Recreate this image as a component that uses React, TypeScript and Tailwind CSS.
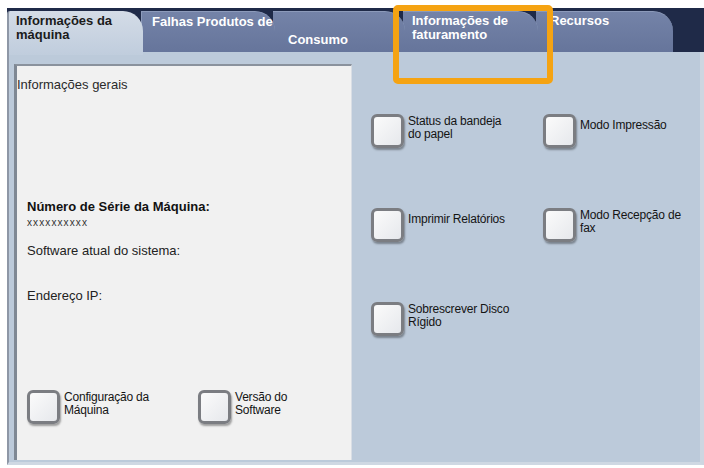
import React from 'react'

type BtnProps = { label: string[]; labelTop?: string }

function SquareButton({ label, labelTop = 'mt-[1px]' }: BtnProps) {
  return (
    <div className="flex items-start">
      <div className="w-[33px] h-[34px] shrink-0 rounded-[6px] border-[3px] border-[#7b7d82] bg-gradient-to-br from-[#fbfbfb] to-[#e6e8ec] shadow-[1px_2px_2px_rgba(0,0,0,0.35)]" />
      <div className={`ml-[4px] ${labelTop} text-[12px] leading-[13px] text-[#141414] tracking-[-0.2px]`}>
        {label.map((l, i) => (
          <div key={i}>{l}</div>
        ))}
      </div>
    </div>
  )
}

export default function App() {
  return (
    <div
      className="relative w-[704px] h-[468px] bg-white overflow-hidden"
      style={{ fontFamily: '"Liberation Sans", Arial, sans-serif' }}
    >
      <div className="absolute left-[7px] top-[8px] w-[697px] h-[457px] flex flex-col">
        {/* tab row */}
        <div className="h-[44px] flex items-start bg-[#1f2a48] pt-[3px] shrink-0">
          <div className="relative w-[136px] h-[44px] rounded-tl-[3px] rounded-tr-[20px] bg-gradient-to-b from-[#d4dce7] to-[#c0cddd] border-l-2 border-[#8e97a6] pl-[7px] pt-[3px] z-20">
            <div className="text-[13px] leading-[14px] font-bold text-[#1b1b1b]">
              <div>Informações da</div>
              <div>máquina</div>
            </div>
          </div>
          <div className="relative w-[134px] h-[41px] -ml-[2px] rounded-tr-[20px] bg-gradient-to-b from-[#7483a8] to-[#66759b] border-t border-l border-[#8c9aba] pl-[10px] pt-[3px] z-10">
            <div className="relative z-30 text-[13px] leading-[14px] font-bold text-white whitespace-nowrap">
              Falhas Produtos de
            </div>
          </div>
          <div className="relative w-[132px] h-[41px] -ml-[2px] rounded-tr-[20px] bg-gradient-to-b from-[#7483a8] to-[#66759b] border-t border-[#8c9aba] pl-[15px] pt-[21px] z-[9]">
            <div className="text-[13px] leading-[14px] font-bold text-white">Consumo</div>
          </div>
          <div className="relative w-[135px] h-[41px] -ml-[2px] rounded-tr-[20px] bg-gradient-to-b from-[#7483a8] to-[#66759b] border-t border-[#8c9aba] pl-[9px] pt-[2px] z-[8]">
            <div className="text-[13px] leading-[14px] font-bold text-white whitespace-nowrap">
              <div>Informações de</div>
              <div>faturamento</div>
            </div>
          </div>
          <div className="relative w-[137px] h-[41px] -ml-[2px] rounded-tr-[20px] bg-gradient-to-b from-[#7483a8] to-[#66759b] border-t border-[#8c9aba] pl-[14px] pt-[2px] z-[7]">
            <div className="text-[13px] leading-[14px] font-bold text-white">Recursos</div>
          </div>
        </div>

        {/* content */}
        <div className="flex-1 flex bg-[#bccada] border-l-2 border-[#8e97a6] border-r-[4px] border-r-[#cdd6e1] border-b-[3px] border-b-[#cfd8e3]">
          {/* left panel */}
          <div className="ml-[5px] mt-[12px] mb-[2px] w-[338px] flex flex-col bg-[#f1f1f1] border-t-2 border-t-[#8a929d] border-l-[3px] border-l-[#7f8894] border-r border-r-[#d9dee5]">
            <div className="mt-[11px] text-[13px] leading-[15px] text-[#2a2a2a]">Informações gerais</div>
            <div className="pl-[10px] mt-[107px] text-[13px] leading-[15px] font-bold text-[#111]">
              Número de Série da Máquina:
            </div>
            <div className="pl-[10px] mt-[3px] text-[10px] leading-[12px] tracking-[1.1px] text-[#333]">xxxxxxxxxx</div>
            <div className="pl-[10px] mt-[14px] text-[13px] leading-[15px] text-[#222]">Software atual do sistema:</div>
            <div className="pl-[10px] mt-[30px] text-[13px] leading-[15px] text-[#222]">Endereço IP:</div>
            <div className="pl-[10px] mt-[87px] flex">
              <div className="w-[171px]">
                <SquareButton label={['Configuração da', 'Máquina']} />
              </div>
              <SquareButton label={['Versão do', 'Software']} />
            </div>
          </div>

          {/* right area */}
          <div className="flex-1 pl-[19px] pt-[62px] flex flex-col gap-[60px]">
            <div className="flex">
              <div className="w-[172px]">
                <SquareButton label={['Status da bandeja', 'do papel']} />
              </div>
              <SquareButton label={['Modo Impressão']} labelTop="mt-[5px]" />
            </div>
            <div className="flex">
              <div className="w-[172px]">
                <SquareButton label={['Imprimir Relatórios']} labelTop="mt-[5px]" />
              </div>
              <SquareButton label={['Modo Recepção de', 'fax']} />
            </div>
            <div className="flex">
              <SquareButton label={['Sobrescrever Disco', 'Rígido']} />
            </div>
          </div>
        </div>
      </div>

      {/* highlight box */}
      <div className="absolute left-[393px] top-[5px] w-[160px] h-[79px] rounded-[5px] border-[6px] border-[#f5a312] z-40" />
    </div>
  )
}
